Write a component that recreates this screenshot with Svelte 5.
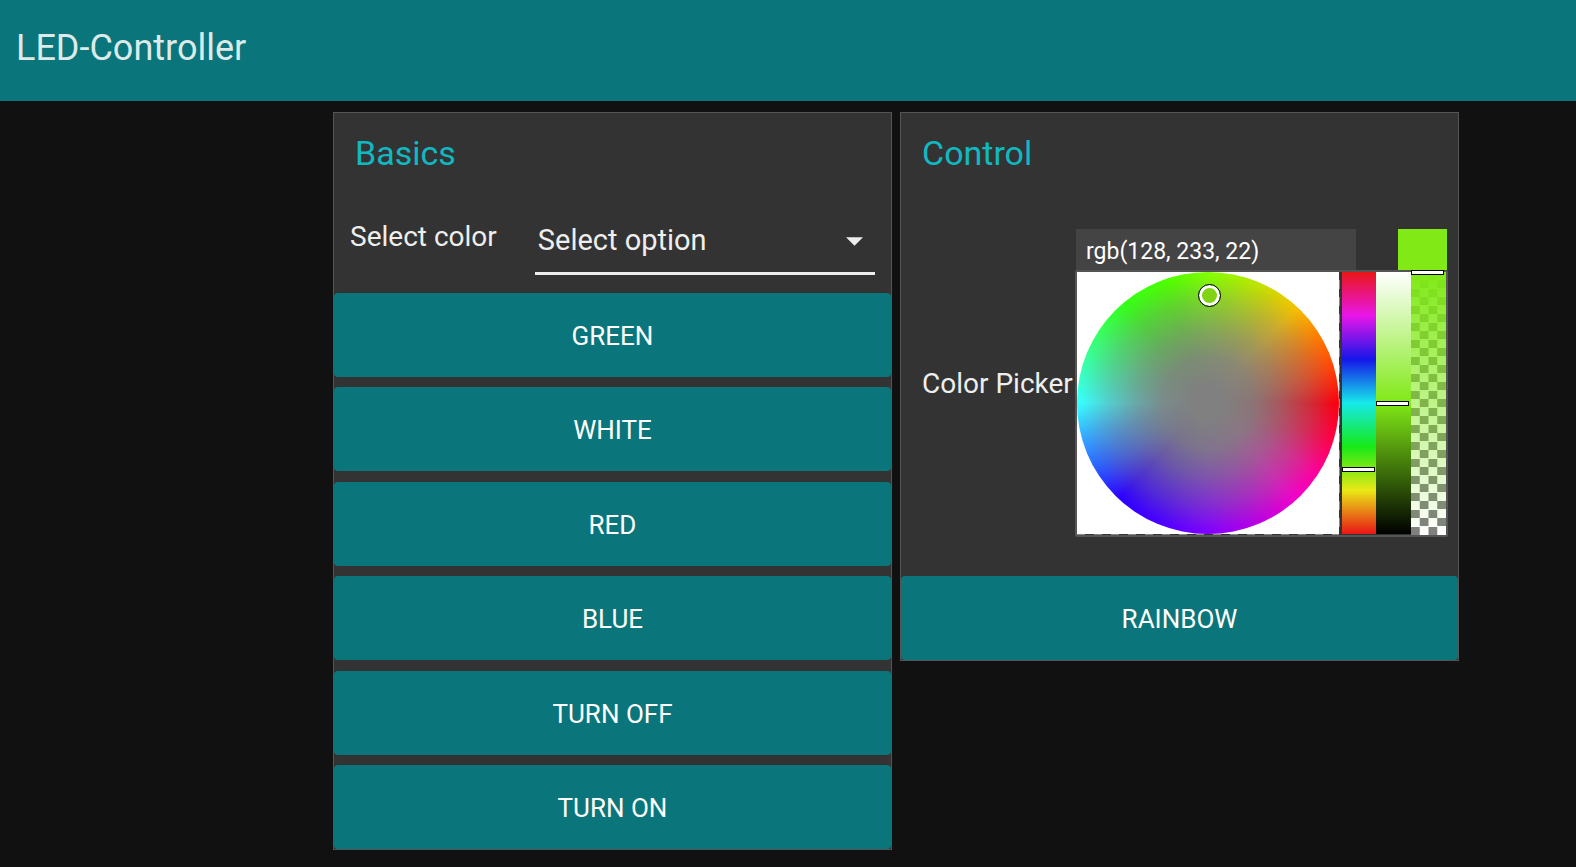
<script>
  const actions = ['GREEN', 'WHITE', 'RED', 'BLUE', 'TURN OFF', 'TURN ON'];
  let option = $state('');
  let color = $state('rgb(128, 233, 22)');
  let hue = $state(89);
  let value = $state(50);
  let alpha = $state(100);
</script>

<header>
  <h1>LED-Controller</h1>
</header>

<main>
  <section class="card">
    <h2>Basics</h2>
    <div class="field">
      <label for="preset">Select color</label>
      <div class="select">
        <select id="preset" bind:value={option}>
          <option value="">Select option</option>
          <option value="green">Green</option>
          <option value="white">White</option>
          <option value="red">Red</option>
          <option value="blue">Blue</option>
        </select>
        <svg viewBox="0 0 18 9" aria-hidden="true"><path d="M0 0H18L9 9Z" fill="#eee" /></svg>
      </div>
    </div>
    <div class="actions">
      {#each actions as action}
        <button type="button">{action}</button>
      {/each}
    </div>
  </section>

  <section class="card">
    <h2>Control</h2>
    <div class="picker-row">
      <label for="color">Color Picker</label>
      <div class="picker">
        <div class="entry">
          <input id="color" type="text" bind:value={color} />
          <span class="swatch"></span>
        </div>
        <div class="panel">
          <div class="wheel-box">
            <div class="wheel"></div>
            <span class="marker"></span>
          </div>
          <div class="channel hue">
            <input type="range" min="0" max="360" bind:value={hue} aria-label="Hue" />
          </div>
          <div class="channel value">
            <input type="range" min="0" max="100" bind:value={value} aria-label="Lightness" />
          </div>
          <div class="channel alpha">
            <input type="range" min="0" max="100" bind:value={alpha} aria-label="Alpha" />
          </div>
        </div>
      </div>
    </div>
    <button type="button">RAINBOW</button>
  </section>
</main>

<style>
  :global(body) {
    margin: 0;
    background: #111;
    color: #eee;
    font-family: Roboto, sans-serif;
    font-size: 28px;
  }

  header {
    box-sizing: border-box;
    min-height: 101px;
    padding: 25px 16px;
    background: #0a757a;
  }

  h1 {
    margin: 0;
    font-size: 36px;
    font-weight: 400;
    line-height: 46px;
    color: #dceaea;
  }

  main {
    display: grid;
    grid-template-columns: 1fr 1fr;
    align-items: start;
    gap: 8px;
    padding: 11px 117px 16px 333px;
  }

  .card {
    min-width: 0;
    border: 1px solid #555;
    background: #333;
  }

  h2 {
    margin: 0;
    padding: 20px 21px;
    font-size: 34px;
    font-weight: 400;
    line-height: 40px;
    color: #10b9c2;
  }

  button {
    display: block;
    width: 100%;
    height: 84px;
    padding: 2px 0 0;
    border: 0;
    border-radius: 4px;
    background: #0a757a;
    color: #fff;
    font-family: inherit;
    font-size: 26px;
  }

  .field {
    display: flex;
    align-items: center;
    gap: 38px;
    padding: 12px 16px 18px;
  }

  .field label {
    padding-bottom: 6px;
    line-height: 40px;
    white-space: nowrap;
  }

  .select {
    position: relative;
    flex: 1;
  }

  select {
    appearance: none;
    display: block;
    width: 100%;
    height: 70px;
    padding: 2px 40px 0 3px;
    border: 0;
    border-bottom: 3px solid #eee;
    border-radius: 0;
    background: transparent;
    color: #eee;
    font-family: inherit;
    font-size: 29px;
  }

  .select svg {
    position: absolute;
    top: 32px;
    right: 12px;
    width: 17px;
    height: 9px;
    pointer-events: none;
  }

  .actions {
    display: flex;
    flex-direction: column;
    justify-content: space-between;
    min-height: 556px;
  }

  .picker-row {
    display: flex;
    align-items: center;
    justify-content: space-between;
    padding: 36px 10px 39px 21px;
  }

  .picker-row label {
    white-space: nowrap;
  }

  .entry {
    display: flex;
    justify-content: space-between;
    height: 41px;
    padding: 0 1px;
  }

  .entry input {
    box-sizing: border-box;
    width: 280px;
    padding: 3px 10px 0;
    border: 0;
    background: #444;
    color: #fff;
    font-family: inherit;
    font-size: 23px;
  }

  .swatch {
    width: 49px;
    background: #80e916;
  }

  .panel {
    display: flex;
    border: 2px solid #555;
    border-radius: 2px;
    background: #333;
  }

  .wheel-box {
    position: relative;
    box-sizing: border-box;
    width: 263px;
    height: 263px;
    margin-right: 2px;
    padding: 0 1px 1px 0;
    background:
      linear-gradient(#fff, #fff) 0 0 / 262px 262px no-repeat,
      repeating-linear-gradient(#333 0 8px, #888 8px 17px) 100% 0 / 1px 100% no-repeat,
      repeating-linear-gradient(90deg, #888 0 8px, #333 8px 17px) 0 100% / 100% 1px no-repeat;
  }

  .wheel {
    height: 100%;
    border-radius: 50%;
    background:
      radial-gradient(
        closest-side,
        #808080 12%,
        rgba(128, 128, 128, 0.9) 35%,
        rgba(128, 128, 128, 0.68) 55%,
        rgba(128, 128, 128, 0.35) 78%,
        rgba(128, 128, 128, 0) 98%
      ),
      conic-gradient(
        #80ff00,
        #b8e800 20deg,
        #f5c000 43deg,
        #ff7800 60deg,
        #ff4008 75deg,
        #fa0010 90deg,
        #ff0048 107deg,
        #ff0098 122deg,
        #f400c8 137deg,
        #c000e0 155deg,
        #8000ff 180deg,
        #4800ff 203deg,
        #2c00ff 223deg,
        #2a60ff 240deg,
        #35b0ff 256deg,
        #38ffff 270deg,
        #38ffb0 286deg,
        #38ff60 303deg,
        #35ff18 320deg,
        #50ff00 342deg,
        #80ff00
      );
  }

  .marker {
    position: absolute;
    top: 12px;
    left: 121px;
    box-sizing: border-box;
    width: 23px;
    height: 23px;
    border: 1px solid #000;
    border-radius: 50%;
    background: #80d414;
    box-shadow: inset 0 0 0 3px #fff;
  }

  .channel {
    position: relative;
    width: 35px;
    height: 262px;
  }

  .hue {
    width: 34px;
    background: linear-gradient(#e91616, #e916e9, #1616e9, #16e9e9, #16e916, #e9e916, #e91616);
  }

  .value {
    background: linear-gradient(#fff, #80e916, #000);
  }

  .alpha {
    height: 263px;
    background:
      linear-gradient(#80e916, rgba(128, 233, 22, 0)),
      repeating-conic-gradient(#808080 0 25%, #fff 0 50%) 0 100% / 50% 17px;
  }

  .channel input {
    position: absolute;
    top: -2px;
    left: 0;
    width: 33px;
    height: 267px;
    margin: 0;
    appearance: none;
    background: transparent;
    writing-mode: vertical-lr;
    direction: rtl;
  }

  .channel input::-webkit-slider-thumb {
    appearance: none;
    box-sizing: border-box;
    width: 33px;
    height: 5px;
    border: 1px solid #000;
    background: #fff;
  }
</style>
